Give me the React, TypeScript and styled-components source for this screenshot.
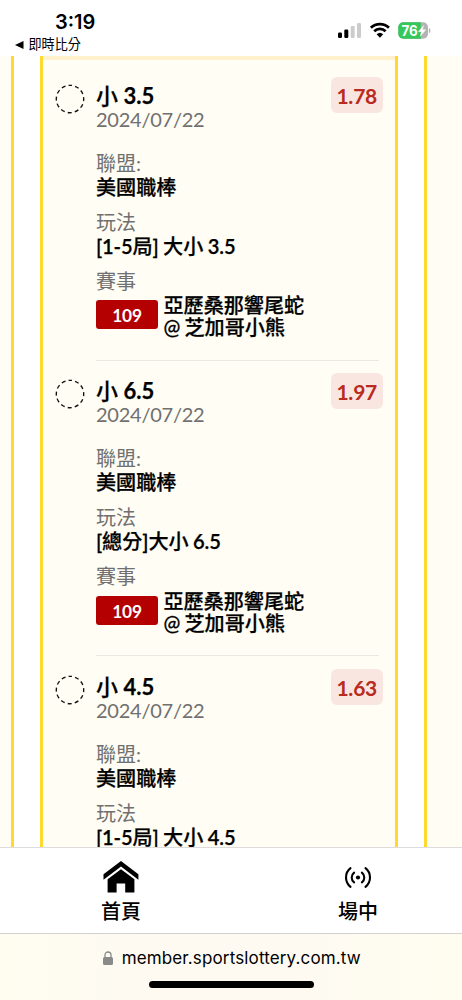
import React from "react";
import styled, { createGlobalStyle } from "styled-components";

const Global = createGlobalStyle`
  * { box-sizing: border-box; }
  body { margin: 0; background: #fff; }
`;

const Screen = styled.div`
  width: 462px;
  height: 1000px;
  display: flex;
  flex-direction: column;
  overflow: hidden;
  background: #fff;
  color: #000;
  font-family: Lato, "Noto Sans CJK TC", sans-serif;
`;

const StatusBar = styled.header`
  height: 56px;
  flex: none;
  display: flex;
  justify-content: space-between;
  font-family: Inter, "Noto Sans CJK TC", sans-serif;
`;

const ClockArea = styled.div`
  padding: 10px 0 0 14px;
`;

const Clock = styled.div`
  padding-left: 41px;
  font-size: 20px;
  line-height: 25px;
  font-weight: 600;
`;

const BackLink = styled.div`
  display: flex;
  align-items: center;
  gap: 4.5px;
  height: 19px;
  font-size: 13.1px;
  line-height: 19px;
  svg { display: block; }
`;

const Indicators = styled.div`
  display: flex;
  align-items: flex-start;
  padding: 22px 31px 0 0;
  svg { display: block; }
`;

const Page = styled.main`
  height: 791px;
  flex: none;
  display: flex;
  overflow: hidden;
  background: #fff;
`;

const Edge = styled.div<{ $side: "left" | "right" }>`
  width: ${(p) => (p.$side === "left" ? 14 : 38)}px;
  flex: none;
  background: #fffdf4;
  ${(p) => (p.$side === "left" ? "border-right" : "border-left")}: 3px solid #ffd92f;
`;

const Slip = styled.section`
  flex: 1;
  margin: 0 26px;
  border: solid #ffd92f;
  border-width: 0 3px;
  background: #fffdf4;
`;

const SlipTop = styled.div`
  height: 4px;
  margin-bottom: 5px;
  background: #fff1cc;
`;

const Bet = styled.article`
  display: flex;
  height: 295.7px;
  margin: 0 12px;
`;

const Marker = styled.div`
  width: 41px;
  flex: none;
  padding-top: 18.8px;
  svg { display: block; }
`;

const Details = styled.div`
  flex: 1;
  display: flex;
  flex-direction: column;
  margin-right: 4px;
  padding-top: 17.5px;
  border-bottom: 1.3px solid #ebe7e2;
`;

const Head = styled.div`
  display: flex;
  justify-content: space-between;
  height: 68px;
`;

const Bold = styled.span`
  font-weight: 700;
`;

const Title = styled.div`
  font-size: 22px;
  line-height: 25px;
  font-weight: 500;
  -webkit-text-stroke: 0.25px currentColor;
`;

const Muted = styled.div`
  color: #707070;
  font-size: 20px;
  line-height: 24px;
`;

const Placed = styled(Muted)`
  letter-spacing: -0.25px;
  line-height: 23px;
`;

const Odds = styled.div`
  width: 51.5px;
  height: 36px;
  margin: -5.2px -3.5px 0 0;
  border-radius: 6px;
  background: #f9e6e0;
  color: #b92b20;
  font-size: 21px;
  line-height: 37px;
  font-weight: 700;
  letter-spacing: -0.2px;
  text-align: center;
`;

const Field = styled.div`
  height: 59.1px;
`;

const Value = styled.div`
  font-size: 20.1px;
  line-height: 25px;
  font-weight: 500;
  white-space: nowrap;
  word-spacing: -0.6px;
  -webkit-text-stroke: 0.25px currentColor;
  ${Bold} { font-weight: 600; letter-spacing: -0.15px; }
`;

const Match = styled.div`
  display: flex;
  gap: 6px;
  padding-top: 1.5px;
`;

const Code = styled.div`
  width: 62px;
  height: 29px;
  margin-top: 6.3px;
  border-radius: 3px;
  background: #b40000;
  color: #fff;
  font-size: 17.3px;
  line-height: 31px;
  font-weight: 700;
  letter-spacing: -0.2px;
  text-align: center;
`;

const Teams = styled.div`
  font-size: 20.1px;
  line-height: 22px;
  font-weight: 500;
  white-space: nowrap;
  word-spacing: -0.9px;
  margin-left: -0.5px;
  -webkit-text-stroke: 0.25px currentColor;
`;

const Nav = styled.nav`
  height: 87px;
  flex: none;
  display: flex;
  justify-content: space-between;
  border-top: 1px solid #dcdcdc;
  border-bottom: 1px solid #d2d2d2;
  padding: 0 64px 0 81px;
`;

const NavItem = styled.div`
  width: 80px;
  display: flex;
  flex-direction: column;
  align-items: center;
  font-size: 20px;
  line-height: 24px;
  font-weight: 500;
  svg { display: block; height: 51px; flex: none; }
`;

const BrowserBar = styled.footer`
  flex: 1;
  display: flex;
  flex-direction: column;
  align-items: center;
  background: linear-gradient(90deg, #fffcf0, #fefaf2 30%, #fefaf2 60%, #fffcf0);
`;

const Address = styled.div`
  display: flex;
  align-items: center;
  gap: 8.5px;
  height: 47px;
  padding-left: 2px;
  font: 400 17px/24px Inter, sans-serif;
  letter-spacing: 0.14px;
  svg { display: block; }
`;

const HomeBar = styled.div`
  width: 165px;
  height: 7px;
  border-radius: 4px;
  background: #000;
`;

interface BetData {
  line: string;
  odds: string;
  period: React.ReactNode;
  match?: { code: string; away: string; home: string };
}

const match = { code: "109", away: "亞歷桑那響尾蛇", home: "芝加哥小熊" };
const firstFive = <><Bold>[1-5</Bold>局<Bold>]</Bold> </>;
const fullGame = <><Bold>[</Bold>總分<Bold>]</Bold></>;

const bets: BetData[] = [
  { line: "3.5", odds: "1.78", period: firstFive, match },
  { line: "6.5", odds: "1.97", period: fullGame, match },
  { line: "4.5", odds: "1.63", period: firstFive },
];

export default function App() {
  return (
    <Screen>
      <Global />
      <StatusBar>
        <ClockArea>
          <Clock>3:19</Clock>
          <BackLink>
            <svg width="10" height="8" viewBox="0 0 10 8"><path d="M1 4 9.5 0V8Z" /></svg>
            即時比分
          </BackLink>
        </ClockArea>
        <Indicators>
          <svg width="93" height="18" viewBox="0 0 93 18">
            <rect x="0" y="10.5" width="4" height="5.5" rx="1.2" />
            <rect x="6.3" y="7.5" width="4" height="8.5" rx="1.2" />
            <rect x="12.7" y="4" width="4" height="12" rx="1.2" fill="#ccc" />
            <rect x="19" y="1" width="4" height="15" rx="1.2" fill="#ccc" />
            <g fill="none" stroke="#000" strokeWidth="2.8">
              <path d="M32.9 5.7a13 13 0 0 1 18 0" />
              <path d="M36.2 9.2a8.2 8.2 0 0 1 11.4 0" />
            </g>
            <path d="M41.9 15.8 38.6 12.3a4.8 4.8 0 0 1 6.6 0Z" />
            <clipPath id="battery"><rect x="60.3" y="0.3" width="29.7" height="16.5" rx="5" /></clipPath>
            <g clipPath="url(#battery)">
              <rect x="60" y="0" width="30" height="17" fill="#b3b3b3" />
              <rect x="60" y="0" width="22.8" height="17" fill="#34c759" />
            </g>
            <path d="M90.9 6v5.2c2-1 2-4.2 0-5.2Z" fill="#b3b3b3" />
            <text x="63.5" y="13.7" fontSize="14" fontWeight="700" fill="#fff" textLength="16.3" lengthAdjust="spacingAndGlyphs" fontFamily="Inter, sans-serif">76</text>
            <path d="M85.6 3.5 80.3 9.7h3.2l-1.2 4.6 5.5-6.5h-3.4Z" fill="#fff" stroke="#fff" strokeWidth="0.4" />
          </svg>
        </Indicators>
      </StatusBar>

      <Page>
        <Edge $side="left" />
        <Slip>
          <SlipTop />
          {bets.map((bet) => (
            <Bet key={bet.line}>
              <Marker>
                <svg width="30" height="30" viewBox="0 0 30 30">
                  <circle cx="15" cy="15" r="13.7" fill="none" stroke="#111" strokeWidth="1.35" strokeDasharray="4.1 3.074" strokeDashoffset="2.05" transform="rotate(-90 15 15)" />
                </svg>
              </Marker>
              <Details>
                <Head>
                  <div>
                    <Title>小 <Bold>{bet.line}</Bold></Title>
                    <Placed>2024/07/22</Placed>
                  </div>
                  <Odds>{bet.odds}</Odds>
                </Head>
                <Field>
                  <Muted>聯盟:</Muted>
                  <Value>美國職棒</Value>
                </Field>
                <Field>
                  <Muted>玩法</Muted>
                  <Value>{bet.period}大小 <Bold>{bet.line}</Bold></Value>
                </Field>
                {bet.match && (
                  <>
                    <Muted>賽事</Muted>
                    <Match>
                      <Code>{bet.match.code}</Code>
                      <Teams>{bet.match.away}<br />@ {bet.match.home}</Teams>
                    </Match>
                  </>
                )}
              </Details>
            </Bet>
          ))}
        </Slip>
        <Edge $side="right" />
      </Page>

      <Nav>
        <NavItem>
          <svg width="36" height="51" viewBox="0 0 36 51">
            <path d="M.5 26.3 18 13.1l17.4 13.2v5.4L18 18.6.5 31.7Z" />
            <path d="M4.6 31.2 18 21.3l13.4 9.9v13.4h-9.2v-9h-8.6v9h-9Z" />
          </svg>
          首頁
        </NavItem>
        <NavItem>
          <svg width="28" height="51" viewBox="0 0 28 51" fill="none" stroke="#000" strokeWidth="2.1" strokeLinecap="round">
            <circle cx="14" cy="29.5" r="2.1" fill="#000" stroke="none" />
            <path d="M10.1 24.6c-3.2 2.6-3.2 7.2 0 9.8M17.9 24.6c3.2 2.6 3.2 7.2 0 9.8M6.5 20.2c-6 4.7-6 13.9 0 18.6M21.5 20.2c6 4.7 6 13.9 0 18.6" />
          </svg>
          場中
        </NavItem>
      </Nav>
      <BrowserBar>
        <Address>
          <svg width="10" height="14" viewBox="0 0 10 14">
            <rect x="0" y="6" width="10" height="8" rx="1.5" fill="#8a8a8a" />
            <path d="M2 6.5V4a3 3 0 0 1 6 0v2.5" fill="none" stroke="#8a8a8a" strokeWidth="1.3" />
          </svg>
          member.sportslottery.com.tw
        </Address>
        <HomeBar />
      </BrowserBar>
    </Screen>
  );
}
